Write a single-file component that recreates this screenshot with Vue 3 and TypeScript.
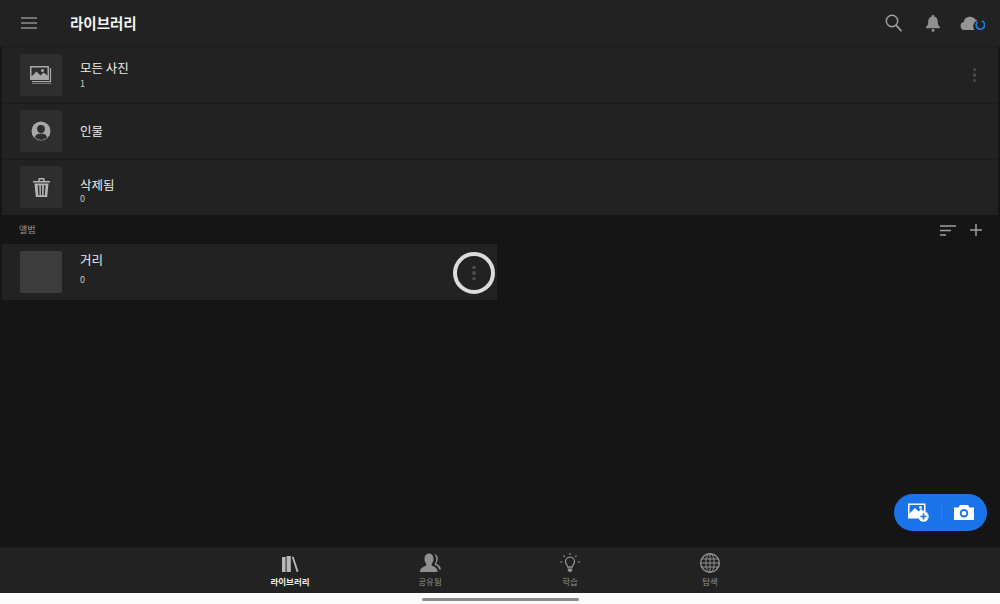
<script setup lang="ts">
const tabs = [
  { key: 'lib', label: '라이브러리', active: true },
  { key: 'shared', label: '공유됨', active: false },
  { key: 'learn', label: '학습', active: false },
  { key: 'explore', label: '탐색', active: false },
]
</script>

<template>
  <div class="app">
    <header class="top">
      <svg class="menu" width="16" height="12" viewBox="0 0 16 12"><path d="M0 1h16M0 6h16M0 11h16" stroke="#8f8f8f" stroke-width="1.6"/></svg>
      <h1 class="title">라이브러리</h1>
      <div class="actions">
        <svg class="search" width="17" height="18" viewBox="0 0 17 18" fill="none" stroke="#a0a0a0"><circle cx="7" cy="7" r="5.700" stroke-width="1.500"/><path d="M11 11.200l5.500 6" stroke-width="1.800"/></svg>
        <svg class="bell" width="14" height="17" viewBox="0 0 14 17" fill="#8f8f8f"><path d="M7 0a1.300 1.300 0 0 1 1.300 1.500C10.800 2.200 11.800 4.200 11.800 7c0 2.500.8 3.800 2.200 5v1.300H0V12c1.400-1.200 2.200-2.500 2.200-5 0-2.800 1-4.800 3.500-5.500A1.300 1.300 0 0 1 7 0z"/><circle cx="7" cy="15.300" r="1.500"/></svg>
        <svg class="cloud" width="25" height="16" viewBox="0 0 25 16"><path d="M4.500 15a4 4 0 0 1-.8-7.900A6.500 6.500 0 0 1 15.500 4.600a4.500 4.500 0 0 1 1.800 1A6.200 6.200 0 0 0 14.200 15z" fill="#959595"/><circle cx="20.400" cy="10" r="4.200" fill="none" stroke="#1a85f0" stroke-width="1.700" stroke-dasharray="21 5.400" transform="rotate(-70 20.400 10)"/></svg>
      </div>
    </header>

    <section class="list">
      <div class="row">
        <div class="thumb">
          <svg width="22" height="18" viewBox="0 0 22 18"><path d="M0 0h19v14H0z" fill="#a8a8a8"/><path d="M1.500 1.500h16v8l-4-3-3 3-4-4-5 5z" fill="#2e2e2e"/><circle cx="12.500" cy="4.500" r="1.500" fill="#a8a8a8"/><path d="M20.500 2v13.500H2" fill="none" stroke="#a8a8a8" stroke-width="1.200"/><path d="M2 17.300h19.500" stroke="#8a8a8a" stroke-width="1"/></svg>
        </div>
        <div class="text t-all"><div class="name">모든 사진</div><div class="count">1</div></div>
        <div class="dots"><i></i><i></i><i></i></div>
      </div>
      <div class="row sep">
        <div class="thumb">
          <svg width="20" height="20" viewBox="0 0 20 20"><circle cx="10" cy="10" r="9.500" fill="#a8a8a8"/><circle cx="10" cy="8" r="3.900" fill="#2e2e2e"/><path d="M3.800 16.500c.8-3 3.500-3.900 6.200-3.900s5.400.9 6.200 3.900A9 9 0 0 1 10 19a9 9 0 0 1-6.200-2.500z" fill="#2e2e2e"/></svg>
        </div>
        <div class="text"><div class="name">인물</div></div>
      </div>
      <div class="row sep">
        <div class="thumb">
          <svg width="17" height="19" viewBox="0 0 17 19" fill="#b4b4b4"><path d="M0 3h17v1.600H0zM5 3l.9-3h5.200l.9 3h-1.500l-.5-1.500H7L6.500 3z"/><path d="M1.500 5.500h14L14.200 19H2.800zM4.700 7.300l.6 10h1.300l-.4-10zM7.900 7.300v10h1.200v-10zM11 7.300l-.4 10h1.300l.6-10z" fill-rule="evenodd"/></svg>
        </div>
        <div class="text t-trash"><div class="name">삭제됨</div><div class="count">0</div></div>
      </div>
    </section>

    <div class="album-head">
      <span class="album-label">앨범</span>
      <div class="album-actions">
        <svg width="16" height="11" viewBox="0 0 16 11"><path d="M0 1h16M0 5.500h11M0 10h6" stroke="#a0a0a0" stroke-width="1.500"/></svg>
        <svg width="12" height="12" viewBox="0 0 12 12"><path d="M0 6h12M6 0v12" stroke="#a0a0a0" stroke-width="1.500"/></svg>
      </div>
    </div>

    <div class="album row">
      <div class="thumb empty"></div>
      <div class="text t-album"><div class="name">거리</div><div class="count">0</div></div>
      <div class="ring"><div class="dots small"><i></i><i></i><i></i></div></div>
    </div>

    <main class="spacer">
      <div class="fab">
        <svg width="21" height="19" viewBox="0 0 21 19"><path d="M0 .5h17.500v10.500A6.500 6.500 0 0 0 10.500 15.500H0z" fill="#fff"/><path d="M1.500 2h14.500v6.500l-3-2.500-2.500 2.500-3.500-3.500-5.500 5.500z" fill="#1a73e8"/><circle cx="12.500" cy="4.500" r="1.400" fill="#fff"/><circle cx="15.500" cy="13.500" r="5.200" fill="#fff"/><path d="M15.500 10.500v6M12.500 13.500h6" stroke="#1a73e8" stroke-width="1.600"/></svg>
        <span class="fab-div"></span>
        <svg width="20" height="15" viewBox="0 0 20 15"><path d="M0 2.500h4.500L6 0h8l1.500 2.500H20V15H0z" fill="#fff"/><circle cx="10" cy="8.300" r="4.200" fill="#1a73e8"/><circle cx="10" cy="8.300" r="2.300" fill="#fff"/></svg>
      </div>
    </main>

    <nav class="tabs">
      <div v-for="t in tabs" :key="t.key" class="tab" :class="{ active: t.active }">
        <svg v-if="t.key === 'lib'" width="17" height="20" viewBox="0 0 17 20" fill="#b8b8b8"><path d="M0 4h3.600v15H0zM4.600 3h4.200v16H4.600zM9.800 4l1.700-.5 5 15-1.800.5z"/></svg>
        <svg v-else-if="t.key === 'shared'" width="21" height="20" viewBox="0 0 21 20" fill="#8f8f8f"><path d="M0 19c0-3.500 2-5 6-6.300.5-.6.500-1.500 0-2.200C4.800 9 4.500 7.500 4.500 5.500 4.500 2.500 6.300.5 9 .5s4.500 2 4.500 5c0 2-.5 3.500-1.500 5-.5.700-.5 1.600 0 2.200 3.800 1.300 5.500 2.800 5.500 6.300z"/><path d="M14 1c2.500.3 3.800 2.200 3.800 4.600 0 1.700-.4 3-1.300 4.200-.3.500-.2 1 .2 1.300 2.500 1.200 4 2.600 4.300 5.400h-1.800c-.4-2-1.700-3.400-4-4.400-.6-.5-.7-1-.3-1.700 1-1.400 1.300-2.800 1.300-4.500 0-2-.9-3.600-2-4.900z"/></svg>
        <svg v-else-if="t.key === 'learn'" width="20" height="20" viewBox="0 0 20 20" fill="none" stroke="#8f8f8f"><path d="M7.800 14c-.3-1.800-2.300-2.800-2.300-5.300a4.500 4.500 0 0 1 9 0c0 2.500-2 3.500-2.300 5.300z" stroke-width="1.300"/><path d="M7.800 15.500h4.400v2l-1.200 1.500H9l-1.200-1.500z" fill="#8f8f8f" stroke="none"/><path d="M10 0v2M3.500 2.500l1.300 1.300M16.500 2.500l-1.300 1.300M0 9h2.300M17.700 9H20" stroke-width="1.200"/></svg>
        <svg v-else width="20" height="20" viewBox="0 0 20 20" fill="none" stroke="#8f8f8f" stroke-width="1"><circle cx="10" cy="10" r="9.300" stroke-width="1.400"/><ellipse cx="10" cy="10" rx="4.200" ry="9.300"/><path d="M10 .7v18.600M1 6h18M.7 10h18.600M1 14h18"/></svg>
        <span class="tab-label">{{ t.label }}</span>
      </div>
    </nav>

    <footer class="home"><span class="pill"></span></footer>
  </div>
</template>

<style>
html, body { margin: 0; background: #151515; }
</style>

<style scoped>
.app {
  width: 1000px;
  height: 604px;
  display: flex;
  flex-direction: column;
  background: #151515;
  font-family: "Noto Sans CJK KR", "Noto Sans", sans-serif;
  color: #fff;
  overflow: hidden;
}
.top {
  height: 47px;
  flex: none;
  box-sizing: border-box;
  background: #222;
  border-bottom: 1px solid #1c1c1c;
  display: flex;
  align-items: center;
  padding-left: 21px;
  padding-right: 15px;
}
.menu { flex: none; }
.title {
  margin: 0 0 0 33px;
  font-size: 14.500px;
  font-weight: 700;
  line-height: 20px;
  color: #f5f5f5;
}
.actions {
  margin-left: auto;
  display: flex;
  align-items: center;
}
.bell { margin-left: 24px; }
.cloud { margin-left: 20px; }
.list {
  margin: 0 2px;
  display: flex;
  flex-direction: column;
  flex: none;
}
.row {
  height: 56px;
  background: #222;
  display: flex;
  align-items: center;
  padding-left: 18px;
  box-sizing: border-box;
  position: relative;
}
.row.sep { box-shadow: inset 0 1px #1b1b1b; }
.thumb {
  width: 42px;
  height: 42px;
  border-radius: 2px;
  background: #2e2e2e;
  display: flex;
  align-items: center;
  justify-content: center;
  flex: none;
}
.thumb.empty { background: #3c3c3c; }
.text {
  margin-left: 18px;
  display: flex;
  flex-direction: column;
}
.name {
  font-size: 12.500px;
  line-height: 16px;
  color: #eee;
}
.count {
  font-size: 9px;
  line-height: 12px;
  color: #ccc;
}
.t-all { margin-top: -1px; }
.t-all .count { margin-top: 2px; }
.t-trash { margin-top: 7px; }
.t-trash .count { margin-top: 0; }
.t-album { margin-top: -6px; }
.t-album .count { margin-top: 6px; }
.dots {
  margin-left: auto;
  margin-right: 22px;
  display: flex;
  flex-direction: column;
  gap: 2px;
}
.dots i {
  width: 3.500px;
  height: 3.500px;
  border-radius: 50%;
  background: #4a4a4a;
  display: block;
}
.album-head {
  height: 29px;
  flex: none;
  box-sizing: border-box;
  display: flex;
  align-items: center;
  justify-content: space-between;
  padding: 1px 18px 0 19px;
}
.album-label {
  font-size: 9px;
  line-height: 12px;
  margin-top: -1px;
  color: #999;
}
.album-actions {
  display: flex;
  align-items: center;
  gap: 14px;
}
.album {
  width: 495px;
  margin-left: 2px;
  flex: none;
}
.ring {
  position: absolute;
  left: 451px;
  top: 8px;
  width: 42px;
  height: 42px;
  box-sizing: border-box;
  border: 4px solid #dcdcdc;
  border-radius: 50%;
  display: flex;
  align-items: center;
  justify-content: center;
}
.dots.small { margin: 0; }
.spacer {
  flex: 1;
  position: relative;
}
.fab {
  position: absolute;
  right: 13px;
  bottom: 16px;
  width: 93px;
  height: 37px;
  border-radius: 19px;
  background: #1a73e8;
  display: flex;
  align-items: center;
  box-sizing: border-box;
  padding: 0 13px 0 14px;
  justify-content: space-between;
}
.fab-div {
  width: 1px;
  height: 17px;
  background: #2f80ea;
}
.tabs {
  height: 46px;
  flex: none;
  background: #222;
  border-top: 1px solid #1c1c1c;
  box-sizing: border-box;
  display: flex;
  justify-content: center;
}
.tab {
  width: 140px;
  display: flex;
  flex-direction: column;
  align-items: center;
  padding-top: 5px;
  box-sizing: border-box;
}
.tab-label {
  font-size: 8.500px;
  line-height: 12px;
  margin-top: 2px;
  color: #8f8f8f;
}
.tab.active .tab-label {
  color: #eee;
  font-weight: 700;
}
.home {
  height: 11px;
  flex: none;
  background: #fbfbfb;
  display: flex;
  justify-content: center;
  padding-top: 5px;
  box-sizing: border-box;
}
.pill {
  width: 157px;
  height: 3px;
  border-radius: 2px;
  background: #8a8a8a;
}
</style>
